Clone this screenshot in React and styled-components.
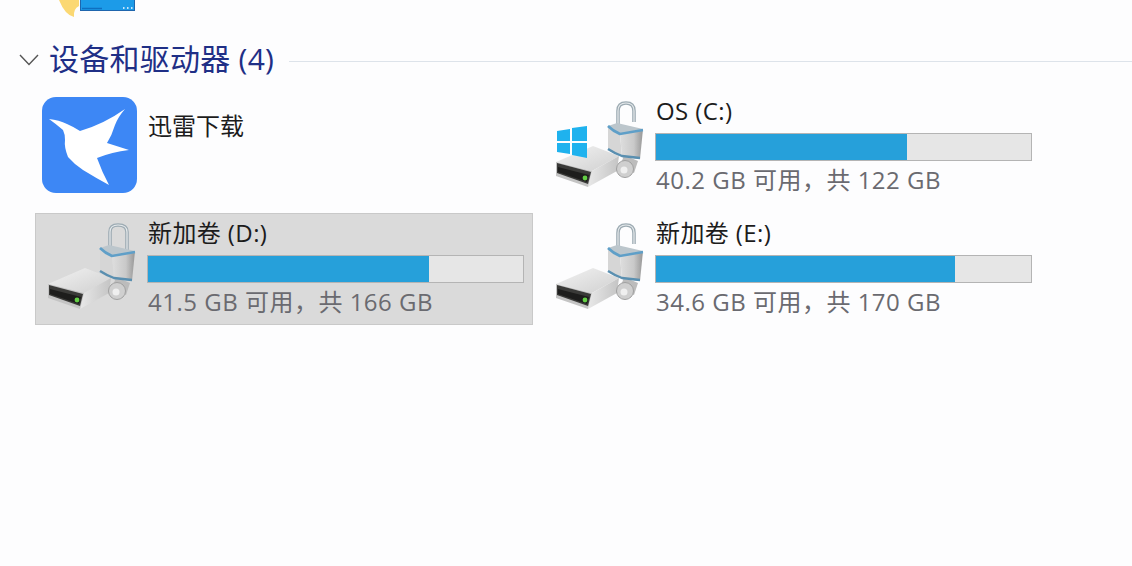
import React from 'react'
import styled, { createGlobalStyle } from 'styled-components'

const GlobalStyle = createGlobalStyle`
  html, body {
    margin: 0;
    height: 100%;
    background: #fdfdfe;
  }
`

const Page = styled.div`
  width: 1132px;
  height: 566px;
  overflow: hidden;
  background: #fdfdfe;
  font-family: 'Open Sans', 'Noto Sans CJK SC', sans-serif;
`

const TopIcon = styled.svg`
  display: block;
  width: 80px;
  height: 18px;
  margin-left: 57px;
  filter: blur(0.4px);
`

const Header = styled.div`
  display: flex;
  align-items: center;
  height: 40px;
  margin-top: 21px;
  padding-left: 19px;
`

const Chevron = styled.svg`
  width: 20px;
  height: 12px;
  margin: 2px 10px 0 0;
  flex: none;
`

const Title = styled.span`
  font-size: 30px;
  line-height: 40px;
  letter-spacing: 0.25px;
  color: #1f2f86;
  white-space: nowrap;
`

const Rule = styled.div`
  flex: 1;
  height: 1px;
  margin: 4px 0 0 15px;
  background: #dde3ea;
`

const Grid = styled.div`
  display: grid;
  grid-template-columns: 498px 498px;
  grid-auto-rows: 112px;
  gap: 10px;
  margin-top: 12px;
  margin-left: 35px;
`

const Tile = styled.div`
  display: flex;
  box-sizing: border-box;
  padding: 1px 0 0 4px;
  border: 1px solid ${(p) => (p.$selected ? '#c9c9c9' : 'transparent')};
  background: ${(p) => (p.$selected ? '#dadada' : 'transparent')};
`

const AppTile = styled(Tile)`
  padding: 5px 0 0 6px;
`

const DriveSvg = styled.svg`
  display: block;
  flex: none;
  width: 90px;
  height: 100px;
  overflow: visible;
  filter: blur(0.5px);
`

const AppSvg = styled.svg`
  display: block;
  flex: none;
  width: 95px;
  height: 96px;
  filter: blur(0.3px);
`

const Info = styled.div`
  display: flex;
  flex-direction: column;
  margin-left: 17px;
  padding-top: 4px;
`

const Name = styled.div`
  padding-left: 1px;
  font-size: 24px;
  line-height: 28px;
  letter-spacing: 0.4px;
  color: #1c1c1c;
  white-space: nowrap;
`

const AppName = styled(Name)`
  margin: 15px 0 0 10px;
  letter-spacing: 0;
`

const Bar = styled.div`
  box-sizing: border-box;
  width: 377px;
  height: 28px;
  margin-top: 8px;
  border: 1px solid #b4b4b4;
  background: #e6e6e6;
`

const BarFill = styled.div`
  height: 100%;
  background: #26a0da;
`

const Usage = styled.div`
  margin-top: 5px;
  padding-left: 1px;
  font-size: 24px;
  line-height: 28px;
  letter-spacing: 0.5px;
  color: #6a6a70;
  white-space: nowrap;
`

const Bird = () => (
  <AppSvg viewBox="0 0 95 96">
    <rect width="95" height="96" rx="14" fill="#3d87f5" />
    <path
      d="M7 22 Q17 23 25 27 Q32 30 38 34 Q62 27 83 12 Q76 20 73 28 Q70 38 65 46 L87 53 Q70 55 55 61 Q60 75 67 88 Q54 81 41 73 Q32 67 26 60 Q22 50 23 43 Q23 37 21 33 Q14 27 7 22 Z"
      fill="#ffffff"
    />
  </AppSvg>
)

const Drive = ({ open, windows }) => {
  const shackle = open
    ? 'M70 33 V18 Q70 10 78 10 Q86 10 86 18 V29'
    : 'M70 33 V17 Q70 10 78 10 Q87 10 87 17 V37'

  return (
    <DriveSvg viewBox="0 0 90 100">
      <defs>
        <linearGradient id="driveTop" x1="0" y1="0" x2="1" y2="1">
          <stop offset="0" stopColor="#f2f2f2" />
          <stop offset="1" stopColor="#d0d0d0" />
        </linearGradient>
        <linearGradient id="driveSide" x1="0" y1="0" x2="1" y2="0">
          <stop offset="0" stopColor="#e8e8e8" />
          <stop offset="1" stopColor="#c4c4c4" />
        </linearGradient>
        <linearGradient id="lockFace" x1="0" y1="0" x2="1" y2="0">
          <stop offset="0" stopColor="#dedede" />
          <stop offset="0.6" stopColor="#c9c9c9" />
          <stop offset="1" stopColor="#979797" />
        </linearGradient>
      </defs>
      <path d="M8 69 L45 53 L71 63 L44 78 Z" fill="url(#driveTop)" />
      <path d="M44 78 L71 63 L69 78 L40 94 Z" fill="url(#driveSide)" />
      <path d="M8 69 L44 78 L40 94 L8 83 Z" fill="#c4c4c4" />
      <path d="M9 70 L43 79 L40 91 L9 80 Z" fill="#3a3a38" />
      <path d="M10 74 L41 82 L39 89 L10 79 Z" fill="#1d1d1c" />
      <circle cx="37" cy="85" r="2.4" fill="#63cf45" />

      <path d="M76 62 L90 68 L86 80 L72 74 Z" fill="#bcbcbc" />
      <circle cx="77" cy="76" r="8.5" fill="#cfcfcf" stroke="#a0a0a0" />
      <circle cx="76" cy="77" r="3.5" fill="#efefef" />

      <path d={shackle} fill="none" stroke="#9dabb3" strokeWidth="3.6" />
      <path d={shackle} fill="none" stroke="#e6eaec" strokeWidth="1.2" />

      <path d="M60 33 L69 30 L95 36 L72 41 Z" fill="#bcc6cc" />
      <path d="M60 33 L72 41 L74 64 L60 56 Z" fill="#d6d6d6" />
      <path d="M72 41 L95 36 L92 66 L74 64 Z" fill="url(#lockFace)" />
      <path d="M60 33 Q65 38 72 41 L95 37" fill="none" stroke="#5f9fc8" strokeWidth="2.6" />
      <path d="M60 56 Q66 60 74 63 L92 65" fill="none" stroke="#5a8fb0" strokeWidth="2.4" />

      {windows && (
        <g fill="#1fb2ee">
          <path d="M9 38 L22 36 V48 H9 Z" />
          <path d="M24 35 L39 33 V48 H24 Z" />
          <path d="M9 50 H22 V61 L9 59 Z" />
          <path d="M24 50 H39 V65 L24 62 Z" />
        </g>
      )}
    </DriveSvg>
  )
}

const drives = [
  { id: 'c', name: 'OS (C:)', free: 40.2, total: 122, windows: true, open: true },
  { id: 'd', name: '新加卷 (D:)', free: 41.5, total: 166, selected: true },
  { id: 'e', name: '新加卷 (E:)', free: 34.6, total: 170, open: true },
]

export default function App() {
  return (
    <Page>
      <GlobalStyle />
      <TopIcon viewBox="0 0 80 18">
        <path d="M2 0 H22 V6 Q16 9 17 17 Q8 15 2 0 Z" fill="#fbd873" />
        <rect x="23.5" y="-2" width="54" height="12.5" fill="#1c9be8" stroke="#1f66ad" />
        <path d="M25 8.5 H45" stroke="#0f6fc0" strokeWidth="1.5" />
        <path d="M66 8 h1.5 M70 8 h1.5 M74 8 h1.5" stroke="#ffffff" strokeWidth="1.5" />
      </TopIcon>
      <Header>
        <Chevron viewBox="0 0 20 12">
          <path d="M1 1 L10 10.5 L19 1" fill="none" stroke="#555555" strokeWidth="1.4" />
        </Chevron>
        <Title>设备和驱动器 (4)</Title>
        <Rule />
      </Header>
      <Grid>
        <AppTile>
          <Bird />
          <AppName>迅雷下载</AppName>
        </AppTile>
        {drives.map((d) => (
          <Tile key={d.id} $selected={d.selected}>
            <Drive open={d.open} windows={d.windows} />
            <Info>
              <Name>{d.name}</Name>
              <Bar>
                <BarFill style={{ width: `${((d.total - d.free) / d.total) * 100}%` }} />
              </Bar>
              <Usage>{d.free} GB 可用，共 {d.total} GB</Usage>
            </Info>
          </Tile>
        ))}
      </Grid>
    </Page>
  )
}
